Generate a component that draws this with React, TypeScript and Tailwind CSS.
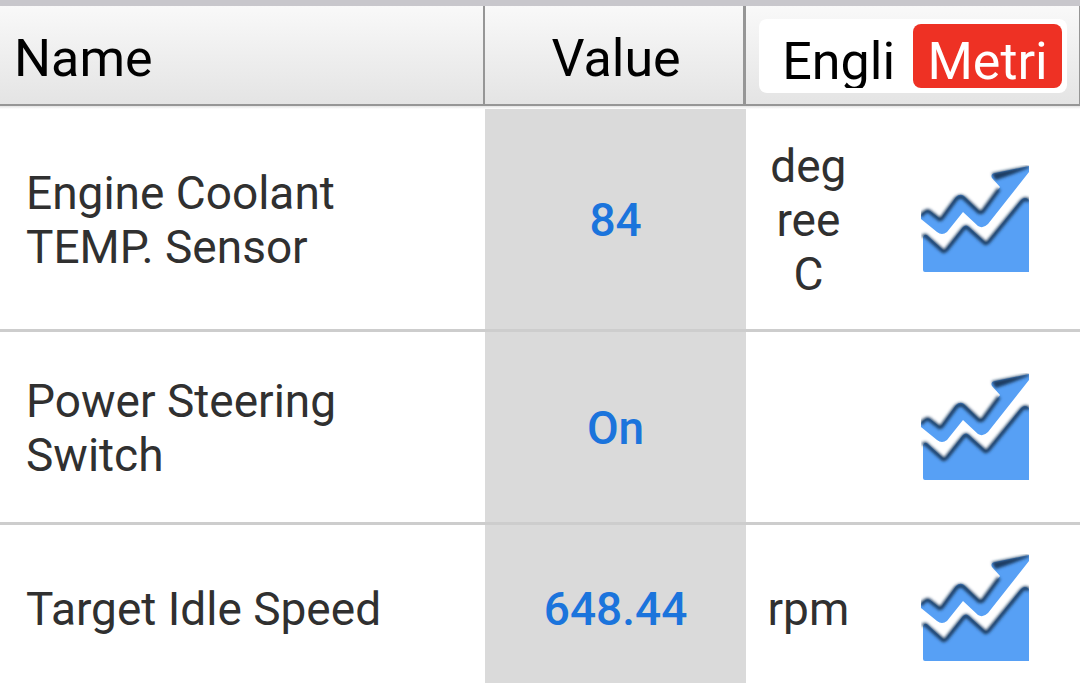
import { useId, useState } from "react";

interface Reading {
  id: number;
  name: string;
  value: string;
  unit: string;
}

const readings: Reading[] = [
  { id: 1, name: "Engine Coolant TEMP. Sensor", value: "84", unit: "degree C" },
  { id: 2, name: "Power Steering Switch", value: "On", unit: "" },
  { id: 3, name: "Target Idle Speed", value: "648.44", unit: "rpm" },
];

const units = ["Engli", "Metri"];

const headCell =
  "h-[100px] border-b-2 border-[#969696] bg-linear-to-b from-[#f9f9f9] to-[#e4e4e4] font-normal text-black";

const bodyCell = "border-b-3 border-[#cdcdcd]";

function ChartIcon() {
  const soft = useId();

  return (
    <svg viewBox="0 0 108 108" className="size-[108px]" aria-hidden="true">
      <defs>
        <filter id={soft} x="-10%" y="-20%" width="120%" height="140%">
          <feGaussianBlur stdDeviation="1.5" />
        </filter>
      </defs>

      {/* arrow */}
      <path
        d="M0 50 Q5 44 9 46 L18 53 Q19 54 21 52 L35 32 Q39 28 43 31 L58 46 Q60 47 62 45 L79 22 L71 13 Q69 9 74 8 L108 1 V7 L67 59 Q62 64 57 61 L42 47 L26 67 Q21 71 16 67 L0 54 Z"
        fill="#57a0f5"
      />
      <g fill="none" stroke="#1c3c62" strokeWidth="4" strokeLinejoin="round" filter={`url(#${soft})`}>
        <path d="M0 51 Q5 44 9 47 L18 54 Q19 55 21 53 L35 34 Q39 30 43 33 L58 47 Q60 48 62 46 L78 24" />
        <path d="M72 9 L107 2 L92 8 L75 14 Z" fill="#1c3c62" strokeWidth="2" />
      </g>

      {/* area below */}
      <path
        d="M2 72 Q4 68 7 71 L22 85 Q24 86 26 83 L42 62 Q45 59 48 62 L64 77 Q66 78 68 75 L100 35 Q104 31 108 35 V107 H4 Q2 107 2 105 Z"
        fill="#57a0f5"
      />
      <path
        d="M2 72 Q4 69 7 73 L22 86 Q24 87 26 84 L42 64 Q45 60 48 64 L64 78 Q66 79 68 76 L100 37 Q104 32 108 36"
        fill="none"
        stroke="#1c3c62"
        strokeWidth="4"
        filter={`url(#${soft})`}
      />
    </svg>
  );
}

export default function App() {
  const [unit, setUnit] = useState("Metri");

  return (
    <div className="min-h-screen overflow-hidden border-t-[6px] border-[#c8c7cc] bg-white font-[Roboto,sans-serif] text-[46px] leading-[54px] text-[#303030]">
      <table className="w-full table-fixed border-separate border-spacing-0">
        <colgroup>
          <col className="w-[44.9%]" />
          <col className="w-[24.2%]" />
          <col className="w-[11.5%]" />
          <col />
        </colgroup>

        <thead className="text-[52px] leading-[56px]">
          <tr>
            <th className={`${headCell} border-r-2 px-3.5 pt-2 text-left`}>Name</th>
            <th className={`${headCell} border-r-3 pt-2 pl-1 text-center`}>Value</th>
            <th colSpan={2} className={`${headCell} border-r pt-0.5 pr-3 pl-[13px]`}>
              <div className="flex rounded-lg bg-white p-[5px]">
                {units.map((u) => (
                  <button
                    key={u}
                    type="button"
                    aria-pressed={unit === u}
                    onClick={() => setUnit(u)}
                    className={`h-16 flex-1 overflow-hidden rounded-lg pt-2.5 ${
                      unit === u ? "bg-[#ee3124] text-white" : "text-black"
                    }`}
                  >
                    {u}
                  </button>
                ))}
              </div>
            </th>
          </tr>
          <tr aria-hidden="true">
            <td colSpan={4} className="h-[3px] bg-linear-to-b from-[#e4e4e4] to-white p-0" />
          </tr>
        </thead>

        <tbody>
          {readings.map((r) => (
            <tr key={r.id}>
              <td className={`${bodyCell} pt-[42px] pr-20 pb-10 pl-[26px]`}>{r.name}</td>
              <td className={`${bodyCell} bg-[#dadada] pt-0.5 text-center font-medium text-[#1b74dc]`}>{r.value}</td>
              <td className={`${bodyCell} px-5 pt-[30px] pb-7 text-center break-words`}>{r.unit}</td>
              <td className={`${bodyCell} py-[29px]`}>
                <button type="button" aria-label={`Graph ${r.name}`} className="mx-auto block">
                  <ChartIcon />
                </button>
              </td>
            </tr>
          ))}
        </tbody>
      </table>
    </div>
  );
}
